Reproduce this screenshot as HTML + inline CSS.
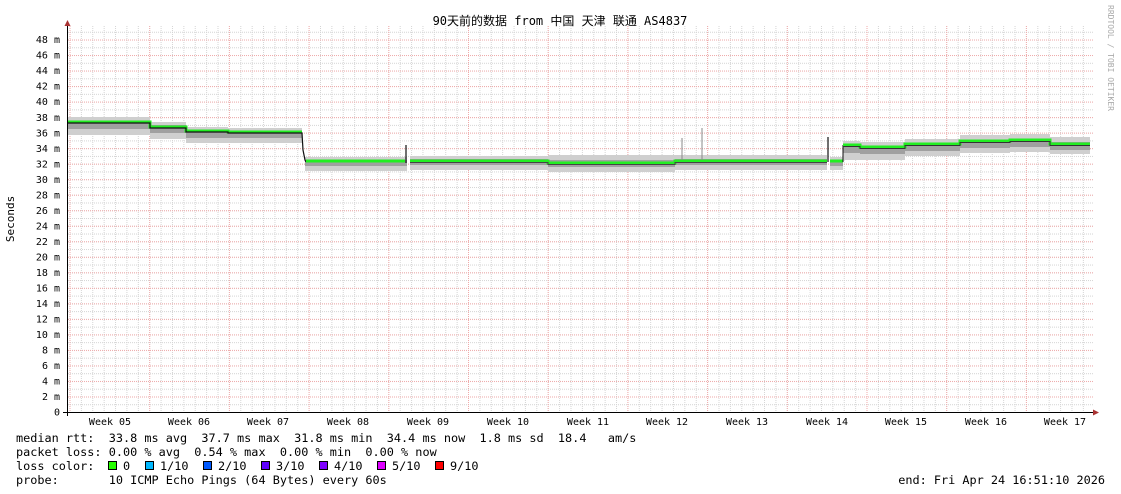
<!DOCTYPE html>
<html><head><meta charset="utf-8"><style>
html,body{margin:0;padding:0;background:#fff;}
svg{display:block;}
.m{font-family:"DejaVu Sans Mono","Liberation Mono",monospace;}
.pre text{white-space:pre;}
</style></head><body>
<svg width="1121" height="494" viewBox="0 0 1121 494" xmlns="http://www.w3.org/2000/svg">
<defs>
<pattern id="vmin" x="69.5" y="0" width="11.386" height="4" patternUnits="userSpaceOnUse">
<rect x="0" y="0" width="1" height="1" fill="#d4d4d4"/><rect x="0" y="2" width="1" height="1" fill="#d4d4d4"/>
</pattern>
<pattern id="hmin" x="0" y="412" width="4" height="7.76" patternUnits="userSpaceOnUse">
<rect x="0" y="0" width="1" height="1" fill="#d4d4d4"/><rect x="2" y="0" width="1" height="1" fill="#d4d4d4"/>
</pattern>
<pattern id="hmaj" x="0" y="412" width="4" height="15.52" patternUnits="userSpaceOnUse">
<rect x="0" y="0" width="1" height="1" fill="#f0aaaa"/><rect x="2" y="0" width="1" height="1" fill="#f0aaaa"/>
</pattern>
<pattern id="vmaj" x="69.5" y="0" width="79.7" height="4" patternUnits="userSpaceOnUse">
<rect x="0" y="0" width="1" height="1" fill="#f0aaaa"/><rect x="0" y="2" width="1" height="1" fill="#f0aaaa"/>
</pattern>
</defs>
<rect x="68" y="26" width="1025" height="386" fill="url(#vmin)"/>
<rect x="68" y="26" width="1025" height="386" fill="url(#hmin)"/>
<rect x="68" y="26" width="1025" height="386" fill="url(#hmaj)"/>
<rect x="68" y="26" width="1025" height="386" fill="url(#vmaj)"/>

<g fill="#cfcfcf">
<rect x="68" y="117" width="82" height="18"/>
<rect x="150" y="122" width="36" height="17"/>
<rect x="186" y="127" width="42" height="16"/>
<rect x="228" y="128" width="74" height="15"/>
<rect x="305" y="157" width="102" height="14"/>
<rect x="410" y="156" width="138" height="14"/>
<rect x="548" y="155" width="127" height="17"/>
<rect x="675" y="155" width="152" height="15"/>
<rect x="830" y="157" width="13" height="13"/>
<rect x="843" y="141" width="17" height="19"/>
<rect x="860" y="142" width="45" height="18"/>
<rect x="905" y="139" width="55" height="17"/>
<rect x="960" y="135" width="50" height="18"/>
<rect x="1010" y="134" width="40" height="18"/>
<rect x="1050" y="137" width="40" height="17"/>
</g>
<g fill="#a0a0a0">
<rect x="68" y="121" width="82" height="8"/>
<rect x="150" y="125" width="36" height="8"/>
<rect x="186" y="130" width="42" height="8"/>
<rect x="228" y="131" width="74" height="7"/>
<rect x="305" y="160" width="102" height="6"/>
<rect x="410" y="159" width="138" height="6"/>
<rect x="548" y="160" width="127" height="7"/>
<rect x="675" y="159" width="152" height="6"/>
<rect x="830" y="160" width="13" height="6"/>
<rect x="843" y="145" width="17" height="8"/>
<rect x="860" y="146" width="45" height="8"/>
<rect x="905" y="143" width="55" height="8"/>
<rect x="960" y="140" width="50" height="8"/>
<rect x="1010" y="139" width="40" height="8"/>
<rect x="1050" y="142" width="40" height="8"/>
</g>
<polyline fill="none" stroke="#22ee22" stroke-width="3" points="68,122 150,122 150,127 186,127 186,131 228,131 228,132 302,132"/>
<polyline fill="none" stroke="#111" stroke-width="1.2" points="68,123 150,123 150,128 186,128 186,132 228,132 228,133 302,133 303,150 305,160 306,162"/>
<polyline fill="none" stroke="#22ee22" stroke-width="3" points="306,161 405,161"/>
<line x1="406" y1="145" x2="406" y2="163" stroke="#111" stroke-width="1.2"/>
<polyline fill="none" stroke="#22ee22" stroke-width="3" points="410,161 548,161 548,163 675,163 675,161 827,161"/>
<polyline fill="none" stroke="#444" stroke-width="1" points="410,162.5 548,162.5 548,164.5 675,164.5 675,162.5 827,162.5"/>
<line x1="828" y1="137" x2="828" y2="162" stroke="#111" stroke-width="1.2"/>
<polyline fill="none" stroke="#22ee22" stroke-width="3" points="830,161 843,161"/>
<line x1="843" y1="145" x2="843" y2="162" stroke="#111" stroke-width="1"/>
<polyline fill="none" stroke="#22ee22" stroke-width="3" points="843,145 860,145 860,147 905,147 905,144 960,144 960,141 1010,141 1010,140 1050,140 1050,144 1090,144"/>
<polyline fill="none" stroke="#333" stroke-width="1" points="843,146.5 860,146.5 860,148.5 905,148.5 905,145.5 960,145.5 960,142.5 1010,142.5 1010,141.5 1050,141.5 1050,145.5 1090,145.5"/>
<line x1="682" y1="138" x2="682" y2="160" stroke="#888" stroke-width="1"/>
<line x1="702" y1="128" x2="702" y2="160" stroke="#888" stroke-width="1"/>

<line x1="67.5" y1="26" x2="67.5" y2="416" stroke="#000" stroke-width="1"/>
<polygon points="64.5,26 70.5,26 67.5,20" fill="#a33"/>
<line x1="63" y1="412.5" x2="1094" y2="412.5" stroke="#000" stroke-width="1"/>
<polygon points="1093,409.5 1093,415.5 1099,412.5" fill="#a33"/>

<g class="m" font-size="10" fill="#000" text-anchor="end">
<text x="60" y="415.5">0</text>
<text x="60" y="400">2 m</text><text x="60" y="384.5">4 m</text><text x="60" y="369">6 m</text><text x="60" y="353.5">8 m</text>
<text x="60" y="338">10 m</text><text x="60" y="322.4">12 m</text><text x="60" y="306.9">14 m</text><text x="60" y="291.4">16 m</text>
<text x="60" y="275.9">18 m</text><text x="60" y="260.4">20 m</text><text x="60" y="244.9">22 m</text><text x="60" y="229.4">24 m</text>
<text x="60" y="213.8">26 m</text><text x="60" y="198.3">28 m</text><text x="60" y="182.8">30 m</text><text x="60" y="167.3">32 m</text>
<text x="60" y="151.8">34 m</text><text x="60" y="136.3">36 m</text><text x="60" y="120.8">38 m</text><text x="60" y="105.2">40 m</text>
<text x="60" y="89.7">42 m</text><text x="60" y="74.2">44 m</text><text x="60" y="58.7">46 m</text><text x="60" y="43.2">48 m</text>
</g>
<g class="m" font-size="10" fill="#000" text-anchor="middle">
<text x="110" y="425">Week 05</text><text x="189" y="425">Week 06</text><text x="268" y="425">Week 07</text>
<text x="348" y="425">Week 08</text><text x="428" y="425">Week 09</text><text x="508" y="425">Week 10</text>
<text x="588" y="425">Week 11</text><text x="667" y="425">Week 12</text><text x="747" y="425">Week 13</text>
<text x="827" y="425">Week 14</text><text x="906" y="425">Week 15</text><text x="986" y="425">Week 16</text>
<text x="1065" y="425">Week 17</text>
</g>
<text x="560" y="25" text-anchor="middle" font-size="12" fill="#000" style='font-family:"DejaVu Sans Mono","Noto Sans CJK SC",monospace'>90天前的数据 from 中国 天津 联通 AS4837</text>
<text class="m" font-size="11" fill="#000" transform="translate(14,219) rotate(-90)" text-anchor="middle">Seconds</text>
<text class="m" font-size="8" fill="#aaa" transform="translate(1108,5) rotate(90)">RRDTOOL / TOBI OETIKER</text>

<g class="m pre" font-size="11.85" fill="#000">
<text x="16" y="442">median rtt:  33.8 ms avg  37.7 ms max  31.8 ms min  34.4 ms now  1.8 ms sd  18.4   am/s</text>
<text x="16" y="456">packet loss: 0.00 % avg  0.54 % max  0.00 % min  0.00 % now</text>
<text x="16" y="470">loss color:</text>
<text x="123" y="470">0</text><text x="160" y="470">1/10</text><text x="218" y="470">2/10</text><text x="276" y="470">3/10</text>
<text x="334" y="470">4/10</text><text x="392" y="470">5/10</text><text x="450" y="470">9/10</text>
<text x="16" y="484">probe:       10 ICMP Echo Pings (64 Bytes) every 60s</text>
<text x="1105" y="484" text-anchor="end">end: Fri Apr 24 16:51:10 2026</text>
</g>
<g stroke="#000" stroke-width="1">
<rect x="108.5" y="461.5" width="8" height="8" fill="#26ff00"/>
<rect x="145.5" y="461.5" width="8" height="8" fill="#00b8ff"/>
<rect x="203.5" y="461.5" width="8" height="8" fill="#0059ff"/>
<rect x="261.5" y="461.5" width="8" height="8" fill="#5e00ff"/>
<rect x="319.5" y="461.5" width="8" height="8" fill="#7e00ff"/>
<rect x="377.5" y="461.5" width="8" height="8" fill="#dd00ff"/>
<rect x="435.5" y="461.5" width="8" height="8" fill="#ff0000"/>
</g>
</svg>
</body></html>
